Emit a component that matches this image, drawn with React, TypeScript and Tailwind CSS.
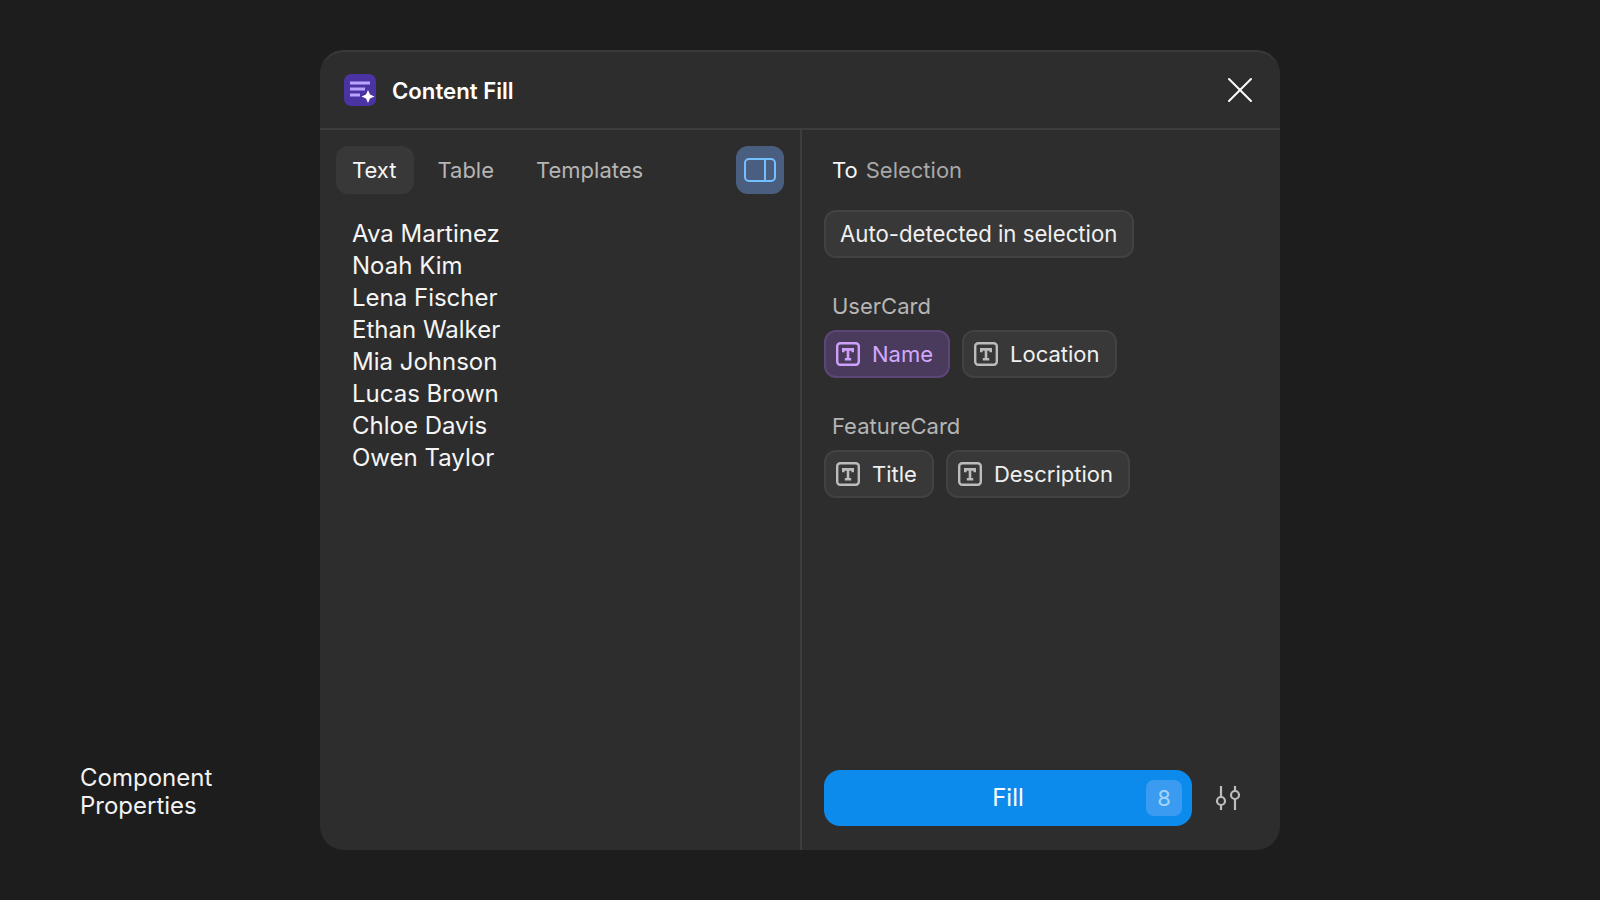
import React from "react";
import { X } from "lucide-react";

const names = [
  "Ava Martinez",
  "Noah Kim",
  "Lena Fischer",
  "Ethan Walker",
  "Mia Johnson",
  "Lucas Brown",
  "Chloe Davis",
  "Owen Taylor",
];

const TypeIcon = ({ className = "" }: { className?: string }) => (
  <svg viewBox="0 0 24 24" fill="none" className={"w-6 h-6 flex-none " + className}>
    <rect x="1.2" y="1.2" width="21.6" height="21.6" rx="3" stroke="currentColor" strokeWidth="2.4" />
    <path d="M7.3 10.2V7.4h9.4v2.8M12 7.4v9.8M8.8 17.2h6.4" stroke="currentColor" strokeWidth="2.6" />
  </svg>
);

const Chip = ({ label, active }: { label: string; active?: boolean }) => (
  <div
    className={
      active
        ? "flex items-center gap-3 h-12 pl-[10px] pr-[15px] rounded-xl border-2 border-[#5c4678] bg-[#4a3b5c] text-[22px] text-[#d4a8ff]"
        : "flex items-center gap-3 h-12 pl-[10px] pr-[15px] rounded-xl border-2 border-[#424242] bg-[#383838] text-[22px] text-[#f0f0f0]"
    }
  >
    <TypeIcon className={active ? "text-[#cfa0fb]" : "text-[#bcbcbc]"} />
    <span>{label}</span>
  </div>
);

export default function App() {
  return (
    <div className="relative h-[900px] w-[1600px] overflow-hidden flex items-center justify-center bg-[#1d1d1d] font-['Inter',sans-serif] text-[24px] leading-8">
      <div className="absolute left-20 top-[764px] text-[24px] leading-7 text-[#f2f2f2]">
        Component
        <br />
        Properties
      </div>

      <div className="flex flex-col w-[960px] h-[800px] rounded-3xl border-t-2 border-[#3a3a3a] bg-[#2d2d2d]">
        <div className="flex items-center justify-between h-[78px] pl-6 pr-[18px] border-b-2 border-[#3e3e3e]">
          <div className="flex items-center gap-4">
            <svg viewBox="0 0 32 32" className="w-8 h-8">
              <rect width="32" height="32" rx="7" fill="#4c33a3" />
              <path d="M6 7.5h20v3H6zM6 13.5h15v3H6zM6 19.5h10v3H6z" fill="#b9a4ff" />
              <path d="M24 16l2 4.5 4.5 2-4.5 2-2 4.5-2-4.5-4.5-2 4.5-2z" fill="#ffffff" />
            </svg>
            <span className="text-[22.2px] font-semibold text-white translate-y-px">Content Fill</span>
          </div>
          <X className="w-11 h-11 text-white" strokeWidth={1.1} />
        </div>

        <div className="flex flex-1 min-h-0">
          <div className="w-[482px] flex-none border-r-2 border-[#3e3e3e] pl-4 pr-4 pt-4">
            <div className="flex items-center text-[22px]">
              <div className="h-12 pl-4 pr-[18px] flex items-center rounded-xl bg-[#383838] text-[#f5f5f5]">Text</div>
              <div className="h-12 ml-[7px] px-4 flex items-center text-[#b5b5b5]">Table</div>
              <div className="h-12 ml-[10px] px-4 flex items-center text-[#b5b5b5]">Templates</div>
              <div className="ml-auto w-12 h-12 flex items-center justify-center rounded-xl bg-[#4a5e80]">
                <svg viewBox="0 0 32 24" fill="none" className="w-8 h-6">
                  <rect x="1" y="1" width="30" height="22" rx="4" stroke="#74bfff" strokeWidth="2" />
                  <path d="M21 1v22" stroke="#74bfff" strokeWidth="2" />
                </svg>
              </div>
            </div>
            <div className="mt-6 pl-4 flex flex-col text-[#f5f5f5]">
              {names.map((name, index) => (
                <div key={index}>{name}</div>
              ))}
            </div>
          </div>

          <div className="flex-1 flex flex-col pl-[22px] pr-[36px] pt-4 pb-6 text-[22px]">
            <div className="h-12 pl-2 flex items-center gap-2">
              <span className="text-[#f5f5f5]">To</span>
              <span className="text-[#a8a8a8]">Selection</span>
            </div>
            <div className="mt-4 self-start h-12 pl-[14px] pr-[15px] flex items-center rounded-xl border-2 border-[#424242] bg-[#383838] text-[22.2px] text-[#f0f0f0]">
              Auto-detected in selection
            </div>
            <div className="mt-8 pl-2 text-[#b5b5b5]">UserCard</div>
            <div className="mt-2 flex gap-3">
              <Chip label="Name" active />
              <Chip label="Location" />
            </div>
            <div className="mt-8 pl-2 text-[#b5b5b5]">FeatureCard</div>
            <div className="mt-2 flex gap-3">
              <Chip label="Title" />
              <Chip label="Description" />
            </div>
            <div className="mt-auto flex items-center">
              <div className="relative w-[368px] h-14 flex items-center justify-center rounded-2xl bg-[#0d8bec] text-[24px] text-white">
                Fill
                <div className="absolute right-[10px] top-[10px] w-9 h-9 flex items-center justify-center rounded-lg bg-[#3a9bf0] text-[22px] text-[#a5d3fb]">
                  8
                </div>
              </div>
              <svg viewBox="0 0 26 26" fill="none" stroke="#bdbdbd" strokeWidth="2.2" className="ml-[23px] w-[26px] h-[26px]">
                <path d="M6 1v11M6 20v5M20 1v5M20 14v11" />
                <circle cx="6" cy="16" r="4" />
                <circle cx="20" cy="10" r="4" />
              </svg>
            </div>
          </div>
        </div>
      </div>
    </div>
  );
}
